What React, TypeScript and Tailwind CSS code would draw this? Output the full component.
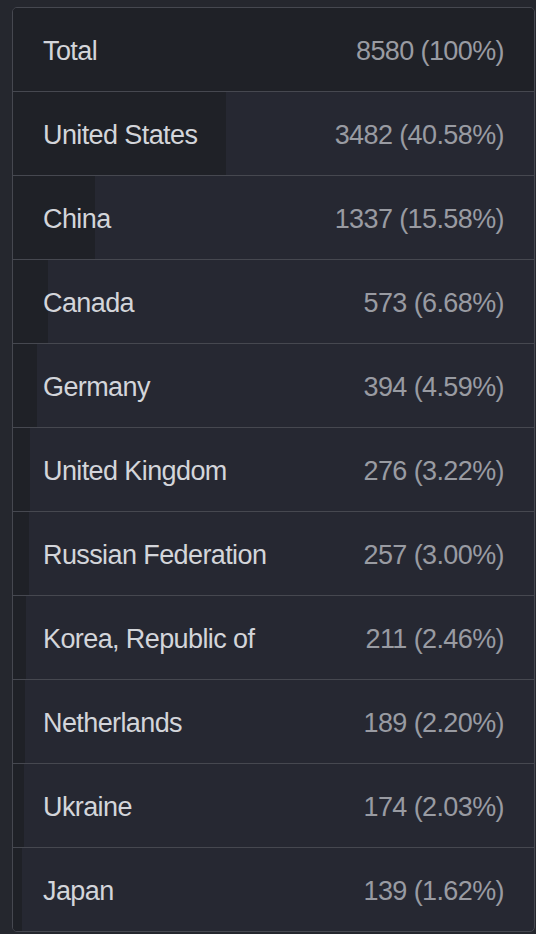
import React from "react";

const rows: { name: string; count: number; pct: string }[] = [
  { name: "Total", count: 8580, pct: "100%" },
  { name: "United States", count: 3482, pct: "40.58%" },
  { name: "China", count: 1337, pct: "15.58%" },
  { name: "Canada", count: 573, pct: "6.68%" },
  { name: "Germany", count: 394, pct: "4.59%" },
  { name: "United Kingdom", count: 276, pct: "3.22%" },
  { name: "Russian Federation", count: 257, pct: "3.00%" },
  { name: "Korea, Republic of", count: 211, pct: "2.46%" },
  { name: "Netherlands", count: 189, pct: "2.20%" },
  { name: "Ukraine", count: 174, pct: "2.03%" },
  { name: "Japan", count: 139, pct: "1.62%" },
];

export default function App() {
  return (
    <div
      className="w-[536px] h-[934px] bg-[#25272e] pt-[7px] pl-[12px] pr-[1px]"
      style={{ fontFamily: '"Liberation Sans", Arial, sans-serif' }}
    >
      <div className="h-[925px] border border-[#464850] rounded-[5px] overflow-hidden bg-[#262832] flex flex-col">
        {rows.map((r, i) => (
          <div
            key={r.name}
            className={`relative shrink-0 ${i > 0 ? "h-[84px] border-t border-[#464850]" : "h-[83px]"}`}
          >
            <div
              className="absolute left-0 top-0 bottom-0 bg-[#1f2127]"
              style={{ width: `${(r.count / 8580) * 100.8}%` }}
            />
            <div className="relative h-full flex items-center justify-between pl-[30px] pr-[30px] pt-[3px] text-[27px] tracking-[-0.6px]">
              <span className="text-[#d3d5da]">{r.name}</span>
              <span className="text-[#999ba2]">
                {r.count} ({r.pct})
              </span>
            </div>
          </div>
        ))}
      </div>
    </div>
  );
}
